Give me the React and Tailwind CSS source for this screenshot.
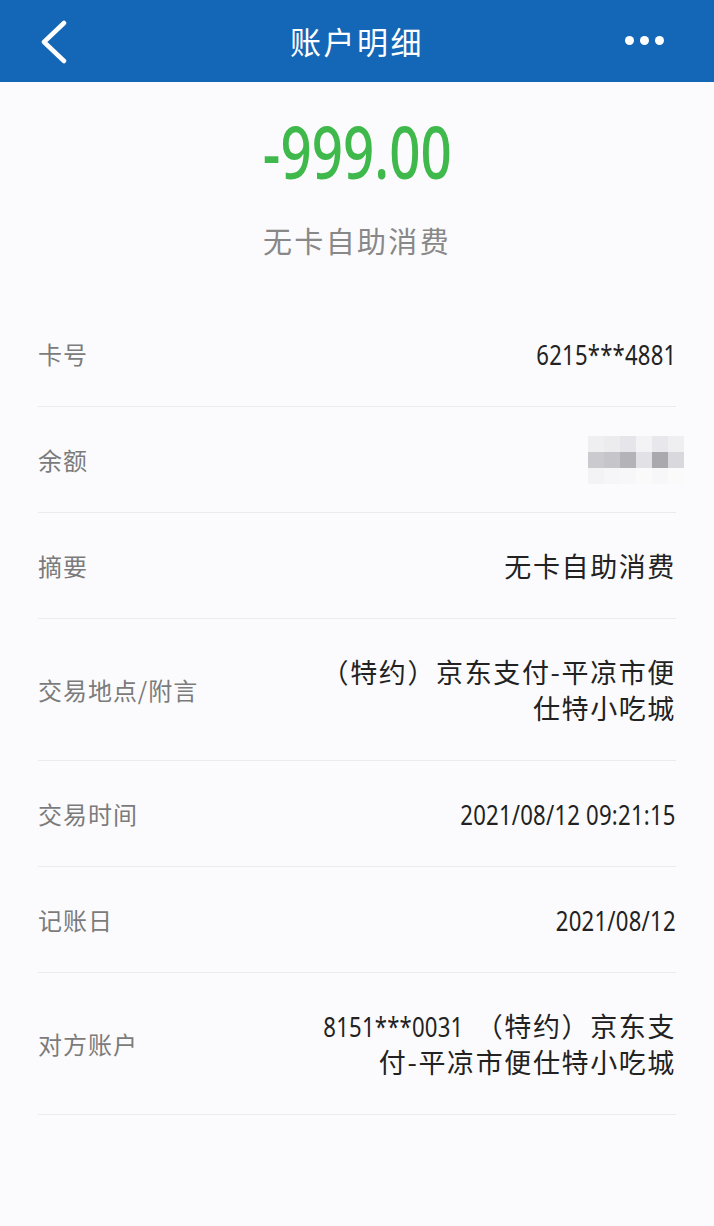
import React from "react";

const cjk = { fontFamily: '"Noto Sans CJK SC", "Noto Sans", sans-serif' };
const num = { fontFamily: '"Noto Sans", "Noto Sans CJK SC", sans-serif' };

function Row({ label, children }) {
  return (
    <div className="flex items-center justify-between border-b border-[#ebebef] py-[34.5px]">
      <div className="text-[24px] leading-[36px] text-[#7b7b7b] tracking-[0.04em]" style={cjk}>
        {label}
      </div>
      <div className="text-right text-[27px] leading-[36px] text-[#222] tracking-[0.06em]" style={cjk}>
        {children}
      </div>
    </div>
  );
}

function Num({ children }) {
  return (
    <span
      className="inline-block origin-right scale-x-[0.79] text-[28px] leading-[36px] tracking-[0.01em] text-[#222]"
      style={num}
    >
      {children}
    </span>
  );
}

function Mosaic() {
  return (
    <div className="mr-[-8px] grid grid-cols-6 grid-rows-3 w-[96px] h-[48px]">
      <div className="bg-[#efeff2]" />
      <div className="bg-[#ececef]" />
      <div className="bg-[#e6e6ea]" />
      <div className="bg-[#f3f3f6]" />
      <div className="bg-[#e8e8ec]" />
      <div className="bg-[#efeff2]" />
      <div className="bg-[#cbcbcf]" />
      <div className="bg-[#c6c6ca]" />
      <div className="bg-[#b3b3b8]" />
      <div className="bg-[#e2e2e6]" />
      <div className="bg-[#a9a9ae]" />
      <div className="bg-[#d9d9dd]" />
      <div className="bg-[#f3f3f6]" />
      <div className="bg-[#f6f6f8]" />
      <div className="bg-[#f7f7f9]" />
      <div className="bg-[#fafafb]" />
      <div className="bg-[#f7f7f9]" />
      <div className="bg-[#fafafb]" />
    </div>
  );
}

export default function App() {
  return (
    <div className="w-[714px] h-[1226px] bg-[#fbfbfd] overflow-hidden">
      <div className="relative flex h-[82px] items-center justify-center bg-[#1467b6]">
        <svg className="absolute left-[38px] top-[20px]" width="32" height="44" viewBox="0 0 32 44">
          <path d="M26 3 L6 22 L26 41" fill="none" stroke="#fff" strokeWidth="4.5" strokeLinecap="round" strokeLinejoin="round" />
        </svg>
        <div className="text-[31px] text-white tracking-[0.08em]" style={cjk}>
          账户明细
        </div>
        <div className="absolute right-[50px] top-[36px] flex gap-[6px]">
          <div className="h-[9px] w-[9px] rounded-full bg-white" />
          <div className="h-[9px] w-[9px] rounded-full bg-white" />
          <div className="h-[9px] w-[9px] rounded-full bg-white" />
        </div>
      </div>

      <div className="flex flex-col items-center pt-[29px]">
        <div
          className="inline-block scale-x-[0.76] text-[72px] leading-[80px] text-[#3fb94b] font-medium"
          style={num}
        >
          -999.00
        </div>
        <div className="mt-[29px] text-[29px] leading-[40px] text-[#888] tracking-[0.08em]" style={cjk}>
          无卡自助消费
        </div>
      </div>

      <div className="mx-[38px] mt-[41px]">
        <Row label="卡号">
          <Num>6215***4881</Num>
        </Row>
        <div className="flex items-center justify-between border-b border-[#ebebef] py-[34.5px]">
          <div className="text-[24px] leading-[36px] text-[#7b7b7b] tracking-[0.04em]" style={cjk}>
            余额
          </div>
          <div className="h-[36px] flex items-center">
            <Mosaic />
          </div>
        </div>
        <Row label="摘要">无卡自助消费</Row>
        <Row label="交易地点/附言">
          （特约）京东支付-平凉市便
          <br />
          仕特小吃城
        </Row>
        <Row label="交易时间">
          <Num>2021/08/12 09:21:15</Num>
        </Row>
        <Row label="记账日">
          <Num>2021/08/12</Num>
        </Row>
        <Row label="对方账户">
          <span
            className="inline-block origin-right scale-x-[0.79] mr-[4px] ml-[-38px] text-[28px] leading-[36px] tracking-[0.01em]"
            style={num}
          >
            8151***0031
          </span>
          <span className="ml-[8px]">（特约）京东支</span>
          <br />
          付-平凉市便仕特小吃城
        </Row>
      </div>
    </div>
  );
}
